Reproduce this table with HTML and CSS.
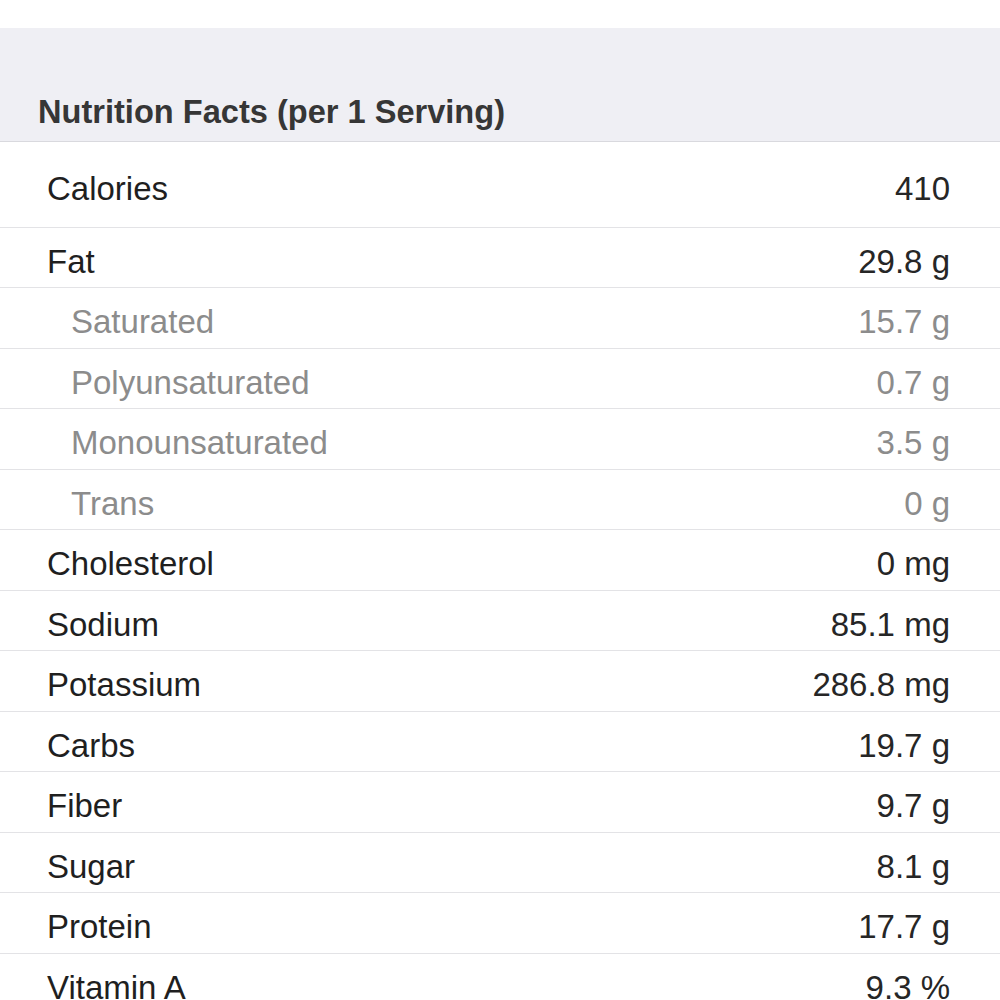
FILE: index.html
```html
<!DOCTYPE html>
<html lang="en">
<head>
<meta charset="utf-8">
<title>Nutrition Facts</title>
<link rel="stylesheet" href="styles.css">
</head>
<body>
<div class="topbar"></div>
<div class="section-header">
  <h2 class="section-title">Nutrition Facts (per 1 Serving)</h2>
</div>
<ul class="facts">
  <li class="row row-tall"><span class="label">Calories</span><span class="value">410</span></li>
  <li class="row"><span class="label">Fat</span><span class="value">29.8 g</span></li>
  <li class="row row-sub"><span class="label">Saturated</span><span class="value">15.7 g</span></li>
  <li class="row row-sub"><span class="label">Polyunsaturated</span><span class="value">0.7 g</span></li>
  <li class="row row-sub"><span class="label">Monounsaturated</span><span class="value">3.5 g</span></li>
  <li class="row row-sub"><span class="label">Trans</span><span class="value">0 g</span></li>
  <li class="row"><span class="label">Cholesterol</span><span class="value">0 mg</span></li>
  <li class="row"><span class="label">Sodium</span><span class="value">85.1 mg</span></li>
  <li class="row"><span class="label">Potassium</span><span class="value">286.8 mg</span></li>
  <li class="row"><span class="label">Carbs</span><span class="value">19.7 g</span></li>
  <li class="row"><span class="label">Fiber</span><span class="value">9.7 g</span></li>
  <li class="row"><span class="label">Sugar</span><span class="value">8.1 g</span></li>
  <li class="row"><span class="label">Protein</span><span class="value">17.7 g</span></li>
  <li class="row"><span class="label">Vitamin A</span><span class="value">9.3 %</span></li>
</ul>
</body>
</html>
```

FILE: styles.css
```css
html, body {
  margin: 0;
  padding: 0;
  background: #ffffff;
  font-family: "Liberation Sans", Arial, sans-serif;
  overflow: hidden;
}

.topbar {
  height: 28px;
  background: #ffffff;
}

.section-header {
  height: 114px;
  box-sizing: border-box;
  background: #efeff4;
  border-bottom: 1px solid #d9d9de;
  display: flex;
  align-items: flex-end;
  padding: 0 0 10px 38px;
}

.section-title {
  margin: 0;
  font-size: 32.6px;
  font-weight: bold;
  color: #363636;
}

.facts {
  list-style: none;
  margin: 0;
  padding: 0;
}

.row {
  height: 60.5px;
  box-sizing: border-box;
  display: flex;
  align-items: center;
  justify-content: space-between;
  padding: 9px 50px 0 47px;
  border-bottom: 1px solid #e3e3e6;
  font-size: 33px;
  color: #1f1f1f;
}

.row-tall {
  height: 85.5px;
}

.row-sub {
  padding-left: 71px;
  color: #8c8c8c;
}

.value {
  color: #262626;
}

.row-sub .value {
  color: #8c8c8c;
}
```
